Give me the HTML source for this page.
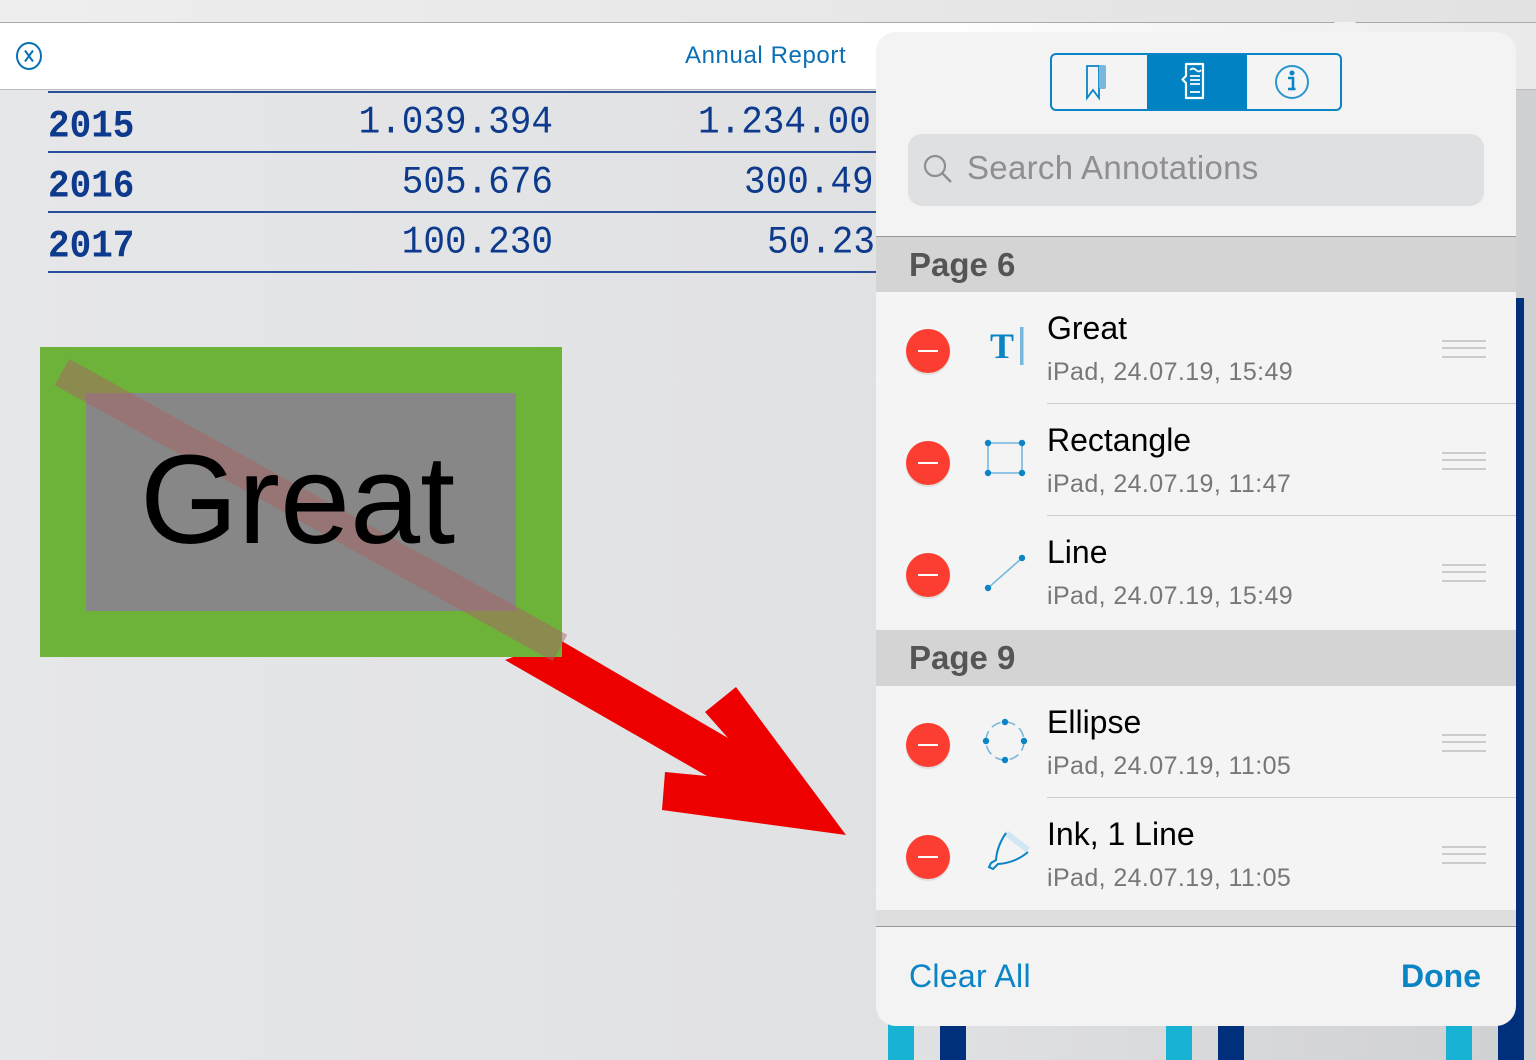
<!DOCTYPE html><html><head><style>
body{margin:0;width:1536px;height:1060px;overflow:hidden;position:relative;font-family:"Liberation Sans",sans-serif;background:linear-gradient(90deg,#e6e7e9 0%,#e0e1e3 60%,#cfd0d2 100%)}
.a{position:absolute}
.mono{font-family:"Liberation Mono",monospace;color:#0d3a8c;font-size:36px;transform:scaleY(1.08);transform-origin:top left}
.row{position:absolute;left:876px;width:640px;height:112px;background:#f4f4f4}
.row .t{position:absolute;left:171px;top:18px;font-size:32px;color:#000}
.row .s{position:absolute;left:171px;top:66px;font-size:25px;letter-spacing:0.4px;color:#777}
.row .m{position:absolute;left:30px;top:37px;width:44px;height:44px;border-radius:50%;background:#fc3d31;box-shadow:0 2px 1px #ddd}
.row .m:after{content:"";position:absolute;left:12px;top:21px;width:20px;height:2px;background:#fff}
.row .d{position:absolute;left:566px;top:48px;width:44px;height:14px;border-top:2px solid #ccc;border-bottom:2px solid #ccc}
.row .d:after{content:"";position:absolute;left:0;top:5px;width:44px;height:2px;background:#ccc}
.row .sep{position:absolute;left:171px;right:0;bottom:0;height:1px;background:#ccc}
.row svg{position:absolute;left:104px;top:34px}
.sh{position:absolute;left:876px;width:640px;height:56px;background:#d4d4d4;font-size:33px;color:#555;font-weight:bold}
.sh span{position:absolute;left:33px;top:9px}
</style></head><body>
<div class="a" style="left:0;top:0;width:1536px;height:22px;background:linear-gradient(90deg,#eee,#e2e2e2)"></div>
<div class="a" style="left:0;top:22px;width:1536px;height:66px;background:linear-gradient(90deg,#fff 60%,#eaeaea);border-top:1px solid #aaa;border-bottom:1px solid #bbb"></div>
<svg class="a" style="left:15px;top:41px" width="28" height="30"><ellipse cx="14" cy="15" rx="12" ry="13" fill="none" stroke="#0a6fb5" stroke-width="2"/><path d="M10 9.5L18 20.5M18 9.5L10 20.5" stroke="#0a6fb5" stroke-width="2"/></svg>
<div class="a" style="left:685px;top:42px;font-size:24px;letter-spacing:0.6px;color:#0a6fb5">Annual Report</div>
<div class="a" style="left:48px;top:91px;width:830px;height:2px;background:#2a4f9a"></div>
<div class="a" style="left:48px;top:151px;width:830px;height:2px;background:#2a4f9a"></div>
<div class="a" style="left:48px;top:211px;width:830px;height:2px;background:#2a4f9a"></div>
<div class="a" style="left:48px;top:271px;width:830px;height:2px;background:#2a4f9a"></div>
<div class="a mono" style="left:48px;top:104px;font-weight:bold">2015</div>
<div class="a mono" style="left:48px;top:164px;font-weight:bold">2016</div>
<div class="a mono" style="left:48px;top:224px;font-weight:bold">2017</div>
<div class="a mono" style="left:350px;top:100px;width:203px;text-align:right">1.039.394</div>
<div class="a mono" style="left:350px;top:160px;width:203px;text-align:right">505.676</div>
<div class="a mono" style="left:350px;top:220px;width:203px;text-align:right">100.230</div>
<div class="a mono" style="left:698px;top:100px">1.234.00</div>
<div class="a mono" style="left:744px;top:160px">300.49</div>
<div class="a mono" style="left:767px;top:220px">50.23</div>
<svg class="a" style="left:0;top:0" width="900" height="900">
<polygon points="560,640 728,738 705,712 736,687 846,835 662,810 665,772 707,776 505,660" fill="#ee0000"/>
<rect x="40" y="347" width="522" height="310" fill="#6db33a"/>
<rect x="86" y="393" width="430" height="218" fill="#878787"/>
<line x1="62" y1="372" x2="560" y2="648" stroke="rgba(170,100,100,0.5)" stroke-width="30"/>
<text x="140" y="543" font-size="126" font-family="Liberation Sans" fill="#000">Great</text>
</svg>
<div class="a" style="left:888px;top:1000px;width:26px;height:60px;background:#17b2d4"></div>
<div class="a" style="left:940px;top:1000px;width:26px;height:60px;background:#002f7c"></div>
<div class="a" style="left:1166px;top:1000px;width:26px;height:60px;background:#17b2d4"></div>
<div class="a" style="left:1218px;top:1000px;width:26px;height:60px;background:#002f7c"></div>
<div class="a" style="left:1446px;top:1000px;width:26px;height:60px;background:#17b2d4"></div>
<div class="a" style="left:1498px;top:1000px;width:26px;height:60px;background:#002f7c"></div>
<div class="a" style="left:1514px;top:298px;width:10px;height:762px;background:#002f7c"></div>
<div class="a" style="left:1325px;top:22px;width:40px;height:12px;background:#f2f2f2;clip-path:polygon(25% 0,75% 0,100% 100%,0 100%)"></div>
<div class="a" style="left:876px;top:32px;width:640px;height:994px;border-radius:20px;background:#f3f3f3;overflow:hidden">
<div class="a" style="left:0;top:204px;width:640px;height:1px;background:#999"></div>
<div class="a" style="left:0;top:878px;width:640px;height:16px;background:#dedede"></div>
<div class="a" style="left:0;top:894px;width:640px;height:1px;background:#999"></div>
</div>
<div class="a" style="left:1050px;top:53px;width:288px;height:54px;border:2px solid #0a84c4;border-radius:6px;overflow:hidden;background:#f4f4f4">
<div class="a" style="left:95px;top:0;width:100px;height:54px;background:#0082c3"></div>
<svg class="a" style="left:32px;top:8px" width="34" height="40"><path d="M3 3H15V35L9 27L3 35Z" fill="none" stroke="#0a84c4" stroke-width="1.8"/><rect x="15" y="2" width="7" height="24" rx="2" fill="#78b8df"/></svg>
<svg class="a" style="left:125px;top:7px" width="40" height="42"><path d="M9 2H26V36H9V21L5.5 17.5L9 14Z" fill="none" stroke="#fff" stroke-width="2.2" stroke-linejoin="round"/><path d="M13 8q3-3 6 0t5 0M13 14H23M13 18H23M13 22H23M13 30H23" stroke="#fff" stroke-width="1.8" fill="none"/></svg>
<svg class="a" style="left:220px;top:7px" width="40" height="40"><circle cx="20" cy="20" r="16" fill="none" stroke="#2a97d0" stroke-width="2"/><circle cx="20" cy="11" r="2.5" fill="#0a84c4"/><path d="M16 16H21V27H23.5M16 27H23.5" stroke="#0a84c4" stroke-width="2.6" fill="none"/></svg>
</div>
<div class="a" style="left:908px;top:134px;width:576px;height:72px;border-radius:14px;background:#dfe0e2"></div>
<svg class="a" style="left:921px;top:152px" width="34" height="34"><circle cx="14" cy="14" r="10" fill="none" stroke="#8e8e93" stroke-width="2.2"/><path d="M21 21L30 30" stroke="#8e8e93" stroke-width="2.4"/></svg>
<div class="a" style="left:967px;top:149px;font-size:33px;letter-spacing:0.3px;color:#8e8e93">Search Annotations</div>
<div class="sh" style="top:237px"><span>Page 6</span></div>
<div class="row" style="top:292px"><div class="m"></div>
<svg width="48" height="44" style="left:108px;top:34px"><text x="6" y="32" font-family="Liberation Serif" font-weight="bold" font-size="36" fill="#0a84c4">T</text><rect x="36" y="1" width="3.5" height="38" fill="#78b8df"/></svg>
<div class="t">Great</div><div class="s">iPad, 24.07.19, 15:49</div><div class="d"></div><div class="sep"></div></div>
<div class="row" style="top:404px"><div class="m"></div>
<svg width="48" height="46" style="left:106px;top:32px"><rect x="6" y="7" width="34" height="30" fill="none" stroke="#78b8df" stroke-width="1.6"/><g fill="#0a84c4"><circle cx="6" cy="7" r="3.2"/><circle cx="40" cy="7" r="3.2"/><circle cx="6" cy="37" r="3.2"/><circle cx="40" cy="37" r="3.2"/></g></svg>
<div class="t">Rectangle</div><div class="s">iPad, 24.07.19, 11:47</div><div class="d"></div><div class="sep"></div></div>
<div class="row" style="top:516px"><div class="m"></div>
<svg width="48" height="48" style="left:106px;top:30px"><line x1="6" y1="42" x2="40" y2="12" stroke="#78b8df" stroke-width="1.6"/><circle cx="6" cy="42" r="3.2" fill="#0a84c4"/><circle cx="40" cy="12" r="3.2" fill="#0a84c4"/></svg>
<div class="t">Line</div><div class="s">iPad, 24.07.19, 15:49</div><div class="d"></div></div>
<div class="sh" style="top:630px;height:56px"><span>Page 9</span></div>
<div class="row" style="top:686px"><div class="m"></div>
<svg width="50" height="50" style="left:104px;top:30px"><circle cx="25" cy="25" r="19" fill="none" stroke="#78b8df" stroke-width="1.6" stroke-dasharray="10 5"/><g fill="#0a84c4"><circle cx="25" cy="6" r="3.2"/><circle cx="25" cy="44" r="3.2"/><circle cx="6" cy="25" r="3.2"/><circle cx="44" cy="25" r="3.2"/></g></svg>
<div class="t">Ellipse</div><div class="s">iPad, 24.07.19, 11:05</div><div class="d"></div><div class="sep"></div></div>
<div class="row" style="top:798px"><div class="m"></div>
<svg width="50" height="50" style="left:106px;top:30px"><path d="M24 5L46 22" stroke="#cfe6f4" stroke-width="6"/><path d="M24 5Q15 18 14 32L9 35L7 39L11 41L16 36Q33 35 46 24" fill="none" stroke="#0a84c4" stroke-width="2"/></svg>
<div class="t">Ink, 1 Line</div><div class="s">iPad, 24.07.19, 11:05</div><div class="d"></div></div>
<div class="a" style="left:909px;top:958px;font-size:32px;letter-spacing:0.3px;color:#0a84c4">Clear All</div>
<div class="a" style="left:1401px;top:958px;font-size:32px;color:#0a84c4;font-weight:bold">Done</div>
</body></html>
